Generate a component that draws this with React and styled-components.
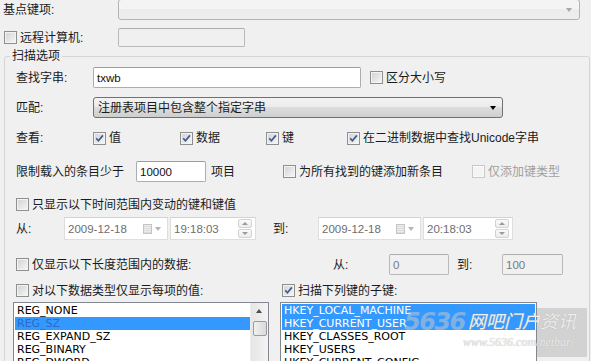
import React from "react";
import styled, { createGlobalStyle } from "styled-components";

const GlobalStyle = createGlobalStyle`
  html, body {
    margin: 0;
    padding: 0;
    background: #f0f0f0;
  }
  body {
    width: 591px;
    height: 361px;
    overflow: hidden;
    font-family: "Liberation Sans", "Noto Sans CJK SC", sans-serif;
    font-size: 12px;
    color: #1a1a1a;
  }
`;

const Page = styled.div`
  position: relative;
  width: 591px;
  height: 361px;
  overflow: hidden;
  padding-left: 3px;
  box-sizing: border-box;
`;

const Row = styled.div`
  display: flex;
  align-items: center;
  height: ${(p) => p.$h}px;
  margin-top: ${(p) => p.$mt || 0}px;
  margin-left: ${(p) => p.$ml || 0}px;
  white-space: nowrap;
`;

const Label = styled.span`
  flex-shrink: 0;
  width: ${(p) => (p.$w ? `${p.$w}px` : "auto")};
  margin-left: ${(p) => p.$ml || 0}px;
  line-height: 16px;
  color: ${(p) => (p.$disabled ? "#a0a0a0" : "#1a1a1a")};
`;

const ComboBox = styled.div`
  position: relative;
  box-sizing: border-box;
  width: ${(p) => p.$w}px;
  height: ${(p) => p.$h}px;
  border: 1px solid ${(p) => (p.$disabled ? "#b4b4b4" : "#707070")};
  border-radius: 3px;
  background: ${(p) =>
    p.$disabled
      ? "linear-gradient(#f4f4f4, #f4f4f4 50%, #ececec 50%, #eeeeee)"
      : "linear-gradient(#f3f3f3, #ebebeb 50%, #dddddd 50%, #cfcfcf)"};
  padding-left: 4px;
  display: flex;
  align-items: center;
  line-height: 16px;
`;

const Arrow = styled.span`
  position: absolute;
  right: ${(p) => p.$r || 6}px;
  top: 50%;
  margin-top: -2px;
  width: 0;
  height: 0;
  border-left: 3.5px solid transparent;
  border-right: 3.5px solid transparent;
  border-top: 4px solid ${(p) => p.$color || "#000"};
`;

const TextBox = styled.div`
  box-sizing: border-box;
  flex-shrink: 0;
  width: ${(p) => p.$w}px;
  height: ${(p) => p.$h}px;
  margin-left: ${(p) => p.$ml || 0}px;
  border: 1px solid ${(p) => (p.$disabled ? "#b9b9b9" : "#abadb3")};
  border-top-color: ${(p) => (p.$disabled ? "#adadad" : "#9a9ca2")};
  border-radius: 2px;
  background: ${(p) => (p.$disabled ? "#f0f0f0" : "#fff")};
  color: ${(p) => (p.$disabled ? "#7a7a7a" : "#111")};
  padding-left: 3px;
  display: flex;
  align-items: center;
  font-size: 11.5px;
`;

const CheckItem = styled.label`
  display: inline-flex;
  align-items: center;
  gap: 3px;
  flex-shrink: 0;
  width: ${(p) => (p.$w ? `${p.$w}px` : "auto")};
  margin-left: ${(p) => p.$ml || 0}px;
  line-height: 16px;
  color: ${(p) => (p.$disabled ? "#a0a0a0" : "#1a1a1a")};
`;

const Box = styled.span`
  position: relative;
  box-sizing: border-box;
  width: 13px;
  height: 13px;
  flex-shrink: 0;
  border: 1px solid ${(p) => (p.$disabled ? "#c9c9c9" : "#8e8f8f")};
  background: ${(p) =>
    p.$disabled
      ? "#f4f4f4"
      : "linear-gradient(135deg, #d2d2d2, #e6e6e6 55%, #f8f8f8)"};
  box-shadow: inset 0 0 0 1px ${(p) => (p.$disabled ? "#fafafa" : "#f3f3f3")};
  svg {
    position: absolute;
    left: 0;
    top: 0;
  }
`;

function Check({ checked, disabled, children, w, ml }) {
  return (
    <CheckItem $w={w} $ml={ml} $disabled={disabled}>
      <Box $disabled={disabled}>
        {checked && (
          <svg width="11" height="11" viewBox="0 0 11 11">
            <path
              d="M2.2 5.3 L4.4 7.8 L8.9 2.4"
              fill="none"
              stroke="#3e5b8e"
              strokeWidth="1.7"
            />
          </svg>
        )}
      </Box>
      {children}
    </CheckItem>
  );
}

const GroupBox = styled.div`
  position: relative;
  box-sizing: border-box;
  width: 586px;
  height: 330px;
  margin-top: 9px;
  margin-left: 1px;
  border: 1px solid #d5d5d5;
  border-radius: 3px;
  padding-left: 11px;
`;

const Legend = styled.span`
  position: absolute;
  left: 5px;
  top: -9px;
  padding: 0 2px 0 2px;
  background: #f0f0f0;
  line-height: 16px;
`;

const Picker = styled.div`
  position: relative;
  box-sizing: border-box;
  flex-shrink: 0;
  width: ${(p) => p.$w}px;
  height: 23px;
  margin-left: ${(p) => p.$ml || 0}px;
  background: #fff;
  border: 1px solid #dedede;
  border-top-color: #d2d2d2;
  padding-left: 3px;
  display: flex;
  align-items: center;
  color: #6e6e6e;
  font-size: 11.5px;
`;

const CalIcon = styled.span`
  position: absolute;
  right: 15px;
  top: 6px;
  width: 9px;
  height: 10px;
  box-sizing: border-box;
  border: 1px solid #c4c4c4;
  background: repeating-linear-gradient(#ececec 0 1px, #dcdcdc 1px 2px);
`;

const Spin = styled.span`
  position: absolute;
  right: 3px;
  top: 1px;
  display: flex;
  flex-direction: column;
  gap: 1px;
`;

const SpinBtn = styled.span`
  position: relative;
  box-sizing: border-box;
  width: 14px;
  height: 9px;
  border: 1px solid #d3d3d3;
  border-radius: 2px;
  background: linear-gradient(#fafafa, #ececec);
  &::after {
    content: "";
    position: absolute;
    left: 3px;
    top: 2px;
    border-left: 3px solid transparent;
    border-right: 3px solid transparent;
    ${(p) =>
      p.$down
        ? "border-top: 3px solid #9a9a9a;"
        : "border-bottom: 3px solid #9a9a9a;"}
  }
`;

function DatePicker({ w, ml, value }) {
  return (
    <Picker $w={w} $ml={ml}>
      {value}
      <CalIcon />
      <Arrow $r={6} $color="#b5b5b5" />
    </Picker>
  );
}

function TimePicker({ w, ml, value }) {
  return (
    <Picker $w={w} $ml={ml}>
      {value}
      <Spin>
        <SpinBtn />
        <SpinBtn $down />
      </Spin>
    </Picker>
  );
}

const ListBox = styled.div`
  position: relative;
  box-sizing: border-box;
  flex-shrink: 0;
  width: ${(p) => p.$w}px;
  height: 70px;
  margin-left: ${(p) => p.$ml || 0}px;
  background: #fff;
  border: 1px solid #828790;
  padding: 1px ${(p) => (p.$scroll ? 18 : 1)}px 0 1px;
  font-family: "DejaVu Sans", sans-serif;
  font-size: 11px;
  overflow: hidden;
`;

const Item = styled.div`
  height: 13px;
  line-height: 13px;
  padding-left: 2px;
  background: ${(p) => (p.$sel ? "#3399ff" : "transparent")};
  color: ${(p) => (p.$sel ? p.$selColor || "#fff" : "#000")};
`;

const ScrollBar = styled.div`
  position: absolute;
  right: 0;
  top: 0;
  bottom: 0;
  width: 17px;
  background: linear-gradient(90deg, #e6e6e6, #f3f3f3);
  border-left: 1px solid #ededed;
`;

const ScrollArrow = styled.div`
  height: 15px;
  position: relative;
  &::after {
    content: "";
    position: absolute;
    left: 5px;
    top: 6px;
    border-left: 3.5px solid transparent;
    border-right: 3.5px solid transparent;
    border-bottom: 4px solid #4d4d4d;
  }
`;

const Thumb = styled.div`
  margin: 3px 1px 0 2px;
  height: 15px;
  box-sizing: border-box;
  border: 1px solid #9c9c9c;
  border-radius: 2px;
  background: linear-gradient(90deg, #f0f0f0, #dadada);
`;

const Watermark = styled.div`
  position: absolute;
  left: 396px;
  top: 308px;
  width: 191px;
  height: 49px;
  background: linear-gradient(90deg, transparent 141px, #d2d2d2 141px);
  pointer-events: none;
`;

const MarkNum = styled.span`
  position: absolute;
  left: 8px;
  top: 0px;
  font-family: "DejaVu Sans", sans-serif;
  font-weight: bold;
  font-style: italic;
  font-size: 24px;
  letter-spacing: -1.5px;
  color: rgba(200, 200, 200, 0.55);
`;

const MarkCn = styled.span`
  position: absolute;
  left: 72px;
  top: 0px;
  font-family: "Noto Sans CJK SC", sans-serif;
  font-style: italic;
  font-size: 18px;
  line-height: 24px;
  color: #eeeeee;
  text-shadow: 0 0 1px #a8a8a8;
`;

const MarkUrl = styled.span`
  position: absolute;
  left: 67px;
  top: 27px;
  font-family: "Liberation Serif", serif;
  font-style: italic;
  font-size: 12px;
  color: #ececec;
  text-shadow: 0 0 1px #b0b0b0;
`;

export default function App() {
  return (
    <Page>
      <GlobalStyle />
      <Row $h={21} $mt={-1}>
        <Label $w={115}>基点键项:</Label>
        <ComboBox $w={462} $h={21} $disabled>
          <Arrow $r={7} $color="#a8a8a8" />
        </ComboBox>
      </Row>
      <Row $h={19} $mt={8}>
        <CheckItem $w={114} $ml={1}>
          <Box />
          远程计算机:
        </CheckItem>
        <TextBox $w={127} $h={19} $disabled />
      </Row>

      <GroupBox>
        <Legend>扫描选项</Legend>
        <Row $h={21} $mt={10}>
          <Label $w={77}>查找字串:</Label>
          <TextBox $w={268} $h={21}>
            txwb
          </TextBox>
          <Check ml={9}>区分大小写</Check>
        </Row>
        <Row $h={21} $mt={9}>
          <Label $w={77}>匹配:</Label>
          <ComboBox $w={410} $h={21}>
            注册表项目中包含整个指定字串
            <Arrow $r={6} />
          </ComboBox>
        </Row>
        <Row $h={18} $mt={11}>
          <Label $w={77}>查看:</Label>
          <Check checked w={87}>
            值
          </Check>
          <Check checked w={86}>
            数据
          </Check>
          <Check checked w={81}>
            键
          </Check>
          <Check checked>在二进制数据中查找Unicode字串</Check>
        </Row>
        <Row $h={21} $mt={14}>
          <Label $w={120}>限制载入的条目少于</Label>
          <TextBox $w={70} $h={21}>
            10000
          </TextBox>
          <Label $w={72} $ml={5}>
            项目
          </Label>
          <Check w={189}>为所有找到的键添加新条目</Check>
          <Check disabled>仅添加键类型</Check>
        </Row>
        <Row $h={17} $mt={14}>
          <Check>只显示以下时间范围内变动的键和键值</Check>
        </Row>
        <Row $h={23} $mt={4}>
          <Label $w={48}>从:</Label>
          <DatePicker w={104} value="2009-12-18" />
          <TimePicker w={86} ml={2} value="19:18:03" />
          <Label $w={45} $ml={17}>
            到:
          </Label>
          <DatePicker w={103} value="2009-12-18" />
          <TimePicker w={90} ml={2} value="20:18:03" />
        </Row>
        <Row $h={21} $mt={14}>
          <Check w={317}>仅显示以下长度范围内的数据:</Check>
          <Label $w={56}>从:</Label>
          <TextBox $w={60} $h={21} $disabled>
            0
          </TextBox>
          <Label $w={45} $ml={8}>
            到:
          </Label>
          <TextBox $w={61} $h={21} $disabled>
            100
          </TextBox>
        </Row>
        <Row $h={17} $mt={7}>
          <Check w={266}>对以下数据类型仅显示每项的值:</Check>
          <Check checked>扫描下列键的子键:</Check>
        </Row>
        <Row $h={70} $mt={3} $ml={-3}>
          <ListBox $w={256} $scroll>
            <Item>REG_NONE</Item>
            <Item $sel $selColor="#2a6cc9">
              REG_SZ
            </Item>
            <Item>REG_EXPAND_SZ</Item>
            <Item>REG_BINARY</Item>
            <Item>REG_DWORD</Item>
            <ScrollBar>
              <ScrollArrow />
              <Thumb />
            </ScrollBar>
          </ListBox>
          <ListBox $w={257} $ml={11}>
            <Item $sel>HKEY_LOCAL_MACHINE</Item>
            <Item $sel>HKEY_CURRENT_USER</Item>
            <Item>HKEY_CLASSES_ROOT</Item>
            <Item>HKEY_USERS</Item>
            <Item>HKEY_CURRENT_CONFIG</Item>
          </ListBox>
        </Row>
      </GroupBox>

      <Watermark>
        <MarkNum>5636</MarkNum>
        <MarkCn>网吧门户资讯</MarkCn>
        <MarkUrl>www.5636.com/netbar/</MarkUrl>
      </Watermark>
    </Page>
  );
}
